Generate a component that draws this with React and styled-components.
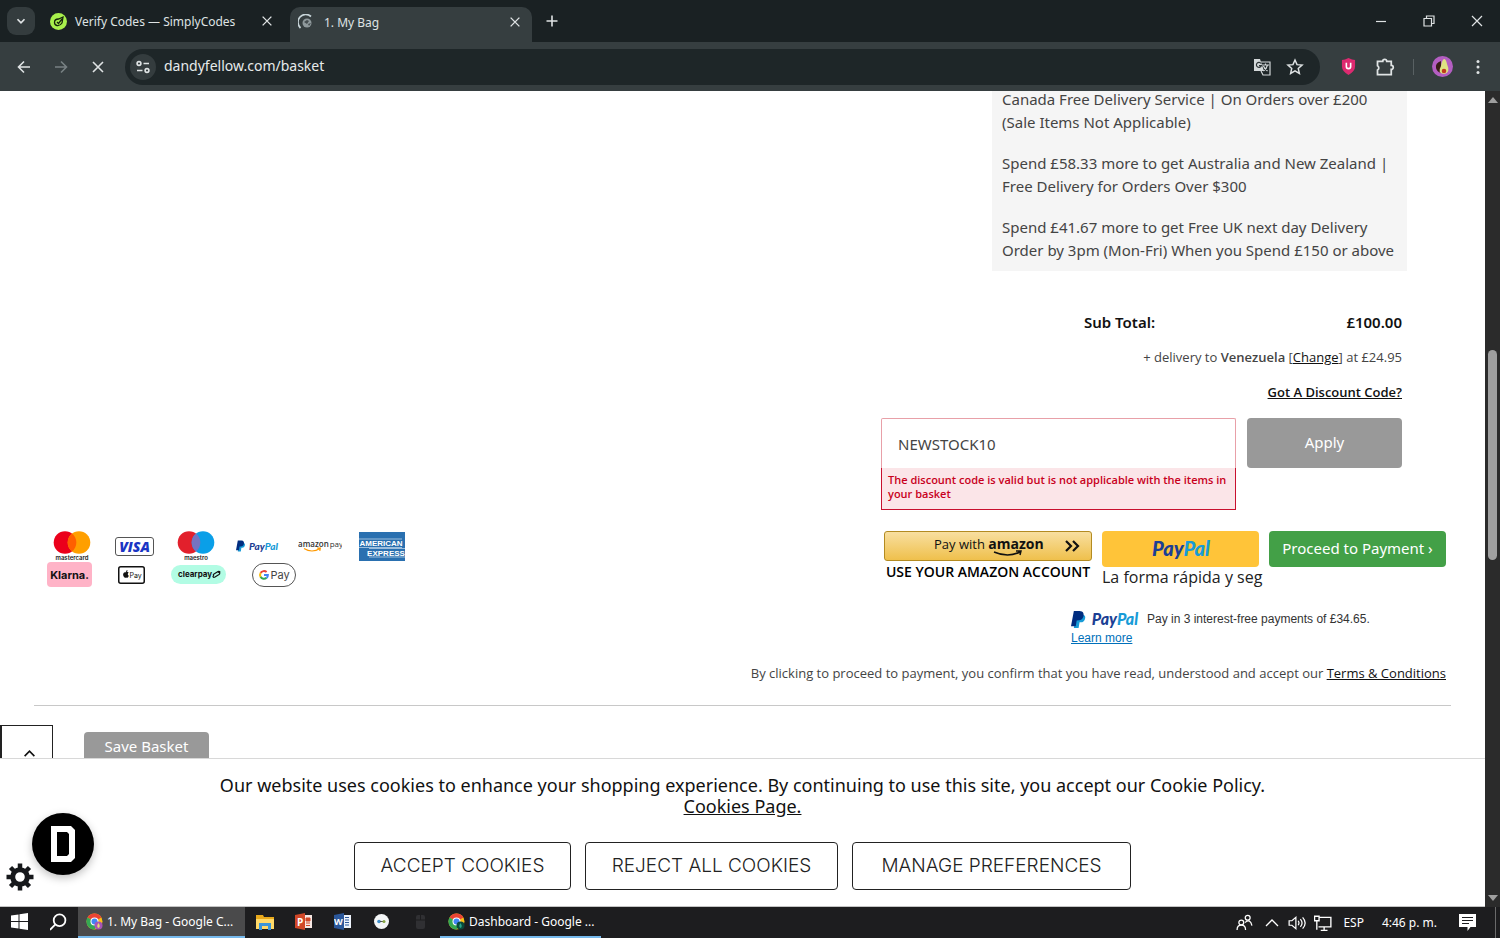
import React, { useState } from 'react'
import styled, { createGlobalStyle } from 'styled-components'

const GlobalStyle = createGlobalStyle`
  * {
    box-sizing: border-box;
  }
  body {
    margin: 0;
    background: #fff;
    font-family: "Noto Sans", sans-serif;
  }
  p {
    margin: 0;
  }
  button {
    font-family: inherit;
    cursor: pointer;
  }
  svg {
    display: block;
    flex: none;
  }
`

const Screen = styled.div`
  display: flex;
  flex-direction: column;
  height: 100vh;
  overflow: hidden;
`

/* BROWSER */

const TabStrip = styled.div`
  display: flex;
  align-items: flex-end;
  height: 42px;
  padding-left: 7px;
  background: #1a2123;
  color: #dfe3e4;
  font-size: 12px;
`

const TabSearch = styled.button`
  display: flex;
  align-items: center;
  justify-content: center;
  width: 28px;
  height: 28px;
  margin-bottom: 7px;
  padding: 0;
  border: 0;
  border-radius: 9px;
  background: #343c3e;
`

const Tab = styled.div`
  display: flex;
  align-items: center;
  gap: ${({ $active }) => ($active ? '10px' : '8px')};
  width: ${({ $active }) => ($active ? '242px' : '255px')};
  height: ${({ $active }) => ($active ? '35px' : '42px')};
  padding: ${({ $active }) => ($active ? '0 9px 5px 8px' : '0 15px 0 15px')};
  border-radius: 10px 10px 0 0;
  background: ${({ $active }) => ($active ? '#363e40' : 'transparent')};
`

const TabTitle = styled.span`
  flex: 1;
  white-space: nowrap;
`

const IconButton = styled.button`
  display: flex;
  align-items: center;
  justify-content: center;
  width: ${({ $size }) => $size || 16}px;
  height: ${({ $size }) => $size || 16}px;
  padding: 0;
  border: 0;
  background: none;
`

const NewTab = styled.div`
  display: flex;
  align-items: center;
  height: 42px;
  padding-left: 12px;
`

const WindowButtons = styled.div`
  display: flex;
  align-items: center;
  gap: 32px;
  height: 42px;
  margin-left: auto;
  padding-right: 15px;
`

const Toolbar = styled.div`
  display: flex;
  align-items: center;
  height: 49px;
  padding: 0 14px 0 16px;
  background: #363e40;
`

const NavButtons = styled.div`
  display: flex;
  gap: 21px;
  margin-right: 19px;
`

const AddressBar = styled.form`
  display: flex;
  align-items: center;
  flex: 1;
  height: 36px;
  padding: 0 16px 0 5px;
  border-radius: 18px;
  background: #1e2628;
`

const SiteInfo = styled.button`
  display: flex;
  align-items: center;
  justify-content: center;
  width: 26px;
  height: 26px;
  padding: 0;
  border: 0;
  border-radius: 50%;
  background: #343c3e;
`

const UrlInput = styled.input`
  flex: 1;
  min-width: 0;
  padding: 0 0 2px 8px;
  border: 0;
  outline: 0;
  background: none;
  color: #e6eaeb;
  font: 14px "Noto Sans", sans-serif;
`

const AddressIcons = styled.div`
  display: flex;
  gap: 15px;
`

const Extensions = styled.div`
  display: flex;
  align-items: center;
  gap: 18px;
  margin-left: 19px;
`

const ToolbarDivider = styled.span`
  width: 1px;
  height: 16px;
  background: #596163;
`

/* PAGE */

const Viewport = styled.div`
  display: flex;
  flex: 1;
  min-height: 0;
`

const Page = styled.div`
  position: relative;
  display: flex;
  flex-direction: column;
  flex: 1;
  min-width: 0;
  border-bottom: 1px solid #c4c4c4;
`

const Basket = styled.main`
  flex: 1;
  min-height: 0;
  overflow: hidden;
  color: #444;
`

const BasketInner = styled.div`
  margin: 0 34px;
  border-bottom: 1px solid #c8c8c8;
  padding-bottom: 22px;
`

const Promo = styled.div`
  display: flex;
  flex-direction: column;
  gap: 18px;
  width: 415px;
  margin: -3px 44px 0 auto;
  padding: 0 10px 9px;
  background: #f5f5f5;
  font-size: 15px;
  line-height: 23px;
  white-space: nowrap;
`

const Summary = styled.section`
  display: flex;
  flex-direction: column;
  align-items: flex-end;
  margin: 39px 49px 0 0;
`

const SubTotal = styled.div`
  display: flex;
  justify-content: space-between;
  width: 318px;
  color: #111;
  font-size: 15px;
  font-weight: 600;
  line-height: 24px;
`

const Delivery = styled.p`
  margin-top: 13px;
  font: 13px/20px "Open Sans", sans-serif;

  b {
    font-weight: 600;
  }
`

const TextLink = styled.a`
  color: #111;
  font-weight: ${({ $bold }) => ($bold ? 600 : 400)};
  text-decoration: underline;
`

const DiscountToggle = styled.p`
  margin-top: 15px;
  font: 13px/20px "Open Sans", sans-serif;
`

const DiscountForm = styled.form`
  display: flex;
  align-items: flex-start;
  gap: 11px;
  margin-top: 16px;
`

const CodeField = styled.div`
  width: 355px;
`

const CodeInput = styled.input`
  display: block;
  width: 100%;
  height: 50px;
  padding: 0 16px;
  border: 1px solid #e8a0a8;
  border-bottom: 0;
  border-radius: 2px 2px 0 0;
  outline: 0;
  color: #444;
  font: 15px "Noto Sans", sans-serif;
`

const FieldError = styled.p`
  padding: 5px 6px 8px;
  border: 1px solid #c8102e;
  border-top: 0;
  background: #fbe5e8;
  color: #c8001c;
  font: 600 11px/14px "Open Sans", sans-serif;
`

const GreyButton = styled.button`
  width: ${({ $width }) => $width}px;
  height: ${({ $height }) => $height}px;
  padding: 0 0 2px;
  border: 0;
  border-radius: 4px;
  background: #999;
  color: #fff;
  font-size: 15px;
`

const PaymentRow = styled.div`
  display: flex;
  align-items: flex-start;
  justify-content: space-between;
  margin: 21px 5px 0;
`

const CardLogos = styled.ul`
  display: grid;
  grid-template-columns: repeat(6, 62px);
  height: 29px;
  place-items: center;
  margin: 0 0 0 2px;
  padding: 0;
  list-style: none;
`

const WalletLogos = styled.ul`
  display: flex;
  align-items: center;
  gap: 26px;
  height: 29px;
  margin: 0;
  padding: 0 0 0 8px;
  list-style: none;
`

const PayButtons = styled.div`
  display: flex;
  gap: 10px;
`

const PayOption = styled.div`
  width: ${({ $width }) => $width}px;
  white-space: nowrap;
`

const AmazonButton = styled.button`
  display: flex;
  align-items: center;
  justify-content: center;
  width: 100%;
  height: 30px;
  padding: 0;
  border: 1px solid #b38b22;
  border-radius: 3px;
  background: linear-gradient(#f8dfa0, #efc04c);
`

const AmazonNote = styled.p`
  color: #000;
  font: 600 14px/22px "Open Sans", sans-serif;
  text-align: center;
`

const PaypalButton = styled.button`
  display: flex;
  align-items: center;
  justify-content: center;
  width: 100%;
  height: 36px;
  padding: 0;
  border: 0;
  border-radius: 4px;
  background: #ffc439;
`

const PaypalNote = styled.p`
  color: #222;
  font: 16px/20px "Open Sans", sans-serif;
`

const ProceedButton = styled.button`
  width: 177px;
  height: 36px;
  padding: 0 0 2px;
  border: 0;
  border-radius: 4px;
  background: #43a047;
  color: #fff;
  font-size: 15px;
  white-space: nowrap;
`

const PayLater = styled.div`
  width: 375px;
  margin: 21px 5px 0 auto;
  color: #333;
  font: 12px/19px "Liberation Sans", Arial, sans-serif;

  a {
    color: #0070ba;
  }
`

const PayLaterLine = styled.p`
  display: flex;
  align-items: center;
  gap: 5px;
`

const Terms = styled.p`
  margin: 15px 5px 0 0;
  font: 13px/20px "Open Sans", sans-serif;
  text-align: right;
`

const SaveRow = styled.div`
  display: flex;
  align-items: flex-start;
  gap: 31px;
  padding-top: 19px;
`

const BackToTop = styled.button`
  display: flex;
  justify-content: center;
  width: 53px;
  height: 53px;
  padding: 22px 0 0 4px;
  border: 1px solid #222;
  border-left-width: 2px;
  background: #fff;
`

const SaveWrap = styled.div`
  padding-top: 7px;
`

/* COOKIES */

const CookieBanner = styled.section`
  padding: 16px 20px;
  border-top: 1px solid #d8d8d8;
  background: #fff;
  color: #111;
  font-size: 18px;
  line-height: 21px;
  text-align: center;
`

const CookieActions = styled.div`
  display: flex;
  justify-content: center;
  gap: 14px;
  margin-top: 25px;
`

const CookieButton = styled.button`
  width: ${({ $width }) => $width}px;
  height: 48px;
  padding: 0 0 2px;
  border: 1px solid #222;
  border-radius: 4px;
  background: #fff;
  color: #222;
  font: 300 19px Inter, sans-serif;
  text-transform: uppercase;
  white-space: nowrap;
`

const ChatBadge = styled.button`
  position: absolute;
  left: 32px;
  bottom: 31px;
  display: flex;
  align-items: center;
  justify-content: center;
  width: 62px;
  height: 62px;
  padding: 0;
  border: 0;
  border-radius: 50%;
  background: #000;
  box-shadow: 0 3px 8px rgba(0, 0, 0, 0.25);
`

const GearBadge = styled.button`
  position: absolute;
  left: 6px;
  bottom: 15px;
  padding: 0;
  border: 0;
  background: none;
`

const Scrollbar = styled.div`
  display: flex;
  flex-direction: column;
  align-items: center;
  width: 15px;
  padding: 6px 0;
  background: #2b2b2b;
`

const ScrollThumb = styled.div`
  width: 9px;
  height: 210px;
  margin: 247px 0 auto;
  border-radius: 5px;
  background: #9f9f9f;
`

/* TASKBAR */

const Taskbar = styled.footer`
  display: flex;
  align-items: stretch;
  height: 31px;
  background: #1d1d1f;
  color: #fff;
  font-size: 12px;
`

const TaskButton = styled.button`
  display: flex;
  align-items: center;
  justify-content: ${({ $label }) => ($label ? 'flex-start' : 'center')};
  gap: 4px;
  width: ${({ $width }) => $width || 39}px;
  padding: ${({ $label }) => ($label ? '0 0 0 8px' : '0')};
  border: 0;
  border-bottom: 2px solid ${({ $label }) => ($label ? '#76b9ed' : 'transparent')};
  background: ${({ $active }) => ($active ? '#4a4a4b' : 'none')};
  color: #fff;
  font-size: 12px;
  white-space: nowrap;
`

const Tray = styled.div`
  display: flex;
  align-items: center;
  gap: 11px;
  margin-left: auto;
  padding-right: 4px;
`

const TrayIcons = styled.div`
  display: flex;
  align-items: center;
  gap: 8px;
`

const TrayClock = styled.span`
  margin: 0 11px 0 7px;
  white-space: nowrap;
`

const ShowDesktop = styled.span`
  width: 1px;
  height: 31px;
  margin-left: 8px;
  background: #6a6a6a;
`

const Line = ({ size = 16, color = '#dfe3e4', width = 1.6, children }) => (
  <svg width={size} height={size} viewBox="0 0 16 16" fill="none" stroke={color} strokeWidth={width} aria-hidden="true">
    {children}
  </svg>
)

const CloseIcon = ({ size, width }) => (
  <Line size={size} width={width}><path d="M3 3l10 10M13 3L3 13" /></Line>
)

const ChromeIcon = ({ badge }) => (
  <svg width="17" height="17" viewBox="0 0 34 34" aria-hidden="true">
    <circle cx="17" cy="17" r="16" fill="#fbc116" />
    <path d="M17 17L3.1 9A16 16 0 0 1 30.9 9z" fill="#ea4335" />
    <path d="M17 17L3.1 9a16 16 0 0 0 13.9 24l6-10z" fill="#34a853" />
    <circle cx="17" cy="17" r="8" fill="#fff" />
    <circle cx="17" cy="17" r="6" fill="#4285f4" />
    <circle cx="25" cy="25" r="8" fill={badge} />
    <path d="M25 20q-5 7 0 10q5-3 0-10" fill={badge === '#a855b5' ? '#e6dc70' : '#2aa889'} />
  </svg>
)

const PaypalWord = ({ width, height, size, mark }) => (
  <svg width={width} height={height} viewBox={`0 0 ${width} ${height}`} role="img" aria-label="PayPal">
    {mark && (
      <g transform={`scale(${height / 20})`}>
        <path d="M5 5h7c3 0 4 3 2 6c-1 2-3 2-5 2l-1 6H3z" fill="#179bd7" />
        <path d="M3 1h6c4 0 5 3 4 6c-1 3-3 4-7 4l-1 6H0z" fill="#012d80" />
      </g>
    )}
    <text x={mark ? size * 1.3 : 1} y={height / 2 + size * 0.36} fontFamily="Lato, sans-serif" fontSize={size} fontWeight="900" fontStyle="italic" fill="#1c3f94">
      Pay<tspan fill="#179bd7">Pal</tspan>
    </text>
  </svg>
)

const PairLogo = ({ left, right, mix, label }) => (
  <svg width="40" height="30" viewBox="0 0 40 30" role="img" aria-label={label}>
    <circle cx="13" cy="11.5" r="11.3" fill={left} />
    <circle cx="27" cy="11.5" r="11.3" fill={right} />
    <path d="M20 2.6a11.3 11.3 0 0 1 0 17.8a11.3 11.3 0 0 1 0-17.8" fill={mix} />
    <text x="20" y="28.5" textAnchor="middle" fontFamily="Inter, sans-serif" fontSize="6" fontWeight="600" fill="#222">{label}</text>
  </svg>
)

const VisaLogo = () => (
  <svg width="39" height="19" viewBox="0 0 39 19" role="img" aria-label="Visa">
    <rect x=".5" y=".5" width="38" height="18" rx="2.5" fill="#fff" stroke="#555" />
    <text x="19.5" y="14.5" textAnchor="middle" fontFamily="Open Sans, sans-serif" fontSize="14" fontWeight="800" fontStyle="italic" fill="#1a35c4">VISA</text>
  </svg>
)

const AmazonPayLogo = () => (
  <svg width="44" height="16" viewBox="0 0 44 16" role="img" aria-label="Amazon Pay">
    <text x="0" y="9" fontFamily="Open Sans, sans-serif" fontSize="8" fontWeight="600" fill="#333">
      amazon<tspan fontWeight="400" dx="1">pay</tspan>
    </text>
    <path d="M6 10.5q8 5 16 0m-3-.5l3.4 0l-.6 3" stroke="#f90" fill="none" strokeWidth="1.1" />
  </svg>
)

const AmexLogo = () => (
  <svg width="46" height="29" viewBox="0 0 46 29" role="img" aria-label="American Express">
    <path d="M0 0h46v29H0z" fill="#2a70b0" />
    <path d="M0 7h43M0 15.5h43M10 16.5h36M10 25h36" stroke="#cfe0f0" strokeWidth=".7" />
    <g fontFamily="Liberation Sans, sans-serif" fontSize="8" fontWeight="700" fill="#fff">
      <text x="22" y="14" textAnchor="middle">AMERICAN</text>
      <text x="27" y="23.5" textAnchor="middle">EXPRESS</text>
    </g>
  </svg>
)

const KlarnaLogo = () => (
  <svg width="45" height="25" viewBox="0 0 45 25" role="img" aria-label="Klarna">
    <rect width="45" height="25" rx="4" fill="#ffb3c7" />
    <text x="22.5" y="17" textAnchor="middle" fontFamily="Inter, sans-serif" fontSize="11" fontWeight="700" fill="#111">Klarna.</text>
  </svg>
)

const ApplePayLogo = () => (
  <svg width="27" height="18" viewBox="0 0 27 18" role="img" aria-label="Apple Pay">
    <rect x=".75" y=".75" width="25.5" height="16.5" rx="2" fill="#fff" stroke="#111" strokeWidth="1.5" />
    <path d="M8 6.3c1-.8 2.3-.4 2.6.4c-1.3.8-1 2.5.3 3c-.6 1.5-1.5 2.5-2.7 1.9c-.9.5-2 .3-2.8-1.5c-.9-2.2.3-4.5 2.6-3.8M7.9 5.9c0-1 .7-1.8 1.6-2c.1 1-.6 1.9-1.6 2" fill="#111" />
    <text x="11.5" y="12" fontFamily="Inter, sans-serif" fontSize="7" fill="#111">Pay</text>
  </svg>
)

const ClearpayLogo = () => (
  <svg width="55" height="19" viewBox="0 0 55 19" role="img" aria-label="Clearpay">
    <rect width="55" height="19" rx="9.5" fill="#b2fce4" />
    <text x="7" y="12" fontFamily="Inter, sans-serif" fontSize="8" fontWeight="700" fill="#111">clearpay</text>
    <path d="M42 11q0 2 2 1l4-2.5q1.5-1 0-2l-1-.5M49 7.5q0-1.5-2-1l-4 2.5q-1.5 1 0 2" stroke="#111" fill="none" strokeWidth="1.2" />
  </svg>
)

const GooglePayLogo = () => (
  <svg width="44" height="24" viewBox="0 0 44 24" role="img" aria-label="Google Pay">
    <rect x=".5" y=".5" width="43" height="23" rx="11.5" fill="#fff" stroke="#555" />
    <g fill="none" strokeWidth="2">
      <path d="M14.6 9.1A4 4 0 0 0 8.6 9.9" stroke="#ea4335" />
      <path d="M8.6 9.9A4 4 0 0 0 8.6 13.9" stroke="#fbbc04" />
      <path d="M8.6 13.9A4 4 0 0 0 14.5 14.9" stroke="#34a853" />
      <path d="M14.5 14.9Q16 13.6 15.9 11.9H12" stroke="#4285f4" />
    </g>
    <text x="18.5" y="16" fontFamily="Inter, sans-serif" fontSize="11" fill="#444">Pay</text>
  </svg>
)

function BrowserChrome() {
  return (
    <header>
      <TabStrip>
        <TabSearch aria-label="Search tabs">
          <Line size={14} width={2}><path d="M4 6l4 4l4-4" /></Line>
        </TabSearch>
        <Tab>
          <svg width="17" height="17" viewBox="0 0 17 17" aria-hidden="true">
            <circle cx="8.5" cy="8.5" r="8.5" fill="#a8f04c" />
            <path d="M4.5 9.5q0-3.5 4-3.5l4.5-2l-1 6q-2 3-5 2.5q-2.5-.5-2.5-3M7 9l1.5 1.5L12 6" stroke="#16240b" strokeWidth="1.3" fill="none" />
          </svg>
          <TabTitle>Verify Codes — SimplyCodes</TabTitle>
          <IconButton aria-label="Close tab"><CloseIcon size={14} /></IconButton>
        </Tab>
        <Tab $active>
          <svg width="16" height="16" viewBox="0 0 16 16" aria-hidden="true">
            <circle cx="9" cy="9" r="4.5" fill="#8f999c" />
            <path d="M6 8l3-2l2 1l-2 3zM10 10l3-1l-2 3z" fill="#454d50" />
            <path d="M2.5 14A7 7 0 0 1 13 2.5" stroke="#c7d4d8" strokeWidth="1.7" fill="none" />
          </svg>
          <TabTitle>1. My Bag</TabTitle>
          <IconButton aria-label="Close tab"><CloseIcon size={14} /></IconButton>
        </Tab>
        <NewTab>
          <IconButton aria-label="New tab"><Line><path d="M8 2.5v11M2.5 8h11" /></Line></IconButton>
        </NewTab>
        <WindowButtons>
          <IconButton aria-label="Minimize"><Line width={1.2}><path d="M3 8.5h10" /></Line></IconButton>
          <IconButton aria-label="Restore"><Line width={1.2}><path d="M3 5.5h7.5v7.5H3zM5.5 5.5V3H13v7.5h-2.5" /></Line></IconButton>
          <IconButton aria-label="Close"><CloseIcon width={1.2} /></IconButton>
        </WindowButtons>
      </TabStrip>
      <Toolbar>
        <NavButtons>
          <IconButton aria-label="Back"><Line><path d="M14 8H3M8 2.5L2.5 8L8 13.5" /></Line></IconButton>
          <IconButton aria-label="Forward"><Line color="#788083"><path d="M2 8h11M8 2.5L13.5 8L8 13.5" /></Line></IconButton>
          <IconButton aria-label="Stop"><CloseIcon /></IconButton>
        </NavButtons>
        <AddressBar onSubmit={(e) => e.preventDefault()}>
          <SiteInfo type="button" aria-label="Site information">
            <Line><circle cx="4" cy="4.5" r="1.9" /><path d="M8.5 4.5H14M2 11.5h5.5" /><circle cx="12" cy="11.5" r="1.9" /></Line>
          </SiteInfo>
          <UrlInput aria-label="Address" defaultValue="dandyfellow.com/basket" />
          <AddressIcons>
            <IconButton type="button" $size={18} aria-label="Translate">
              <svg width="18" height="18" viewBox="0 0 18 18" aria-hidden="true">
                <path d="M1 1h6l4 12H1z" fill="#d3d8d9" />
                <path d="M8 4h9v13H10L8 13M9 7h7M12.5 5.5V7m2 0q-1 4-4 6m0-5q1 3 4 5" stroke="#d3d8d9" fill="none" strokeWidth="1.2" />
                <path d="M8 5.5a2.5 2.5 0 1 0 .3 2.2H6" stroke="#2a3234" fill="none" strokeWidth="1.2" />
              </svg>
            </IconButton>
            <IconButton type="button" $size={18} aria-label="Bookmark">
              <Line size={18} width={1.3}><path d="M8 1.8l1.8 4.1l4.5.4l-3.4 3l1 4.4L8 11.4l-3.9 2.3l1-4.4l-3.4-3l4.5-.4z" /></Line>
            </IconButton>
          </AddressIcons>
        </AddressBar>
        <Extensions>
          <IconButton $size={18} aria-label="Shield">
            <svg width="15" height="17" viewBox="0 0 16 18" aria-hidden="true">
              <path d="M8 0q4 2 7 2v7q0 5-7 9q-7-4-7-9V2q3 0 7-2" fill="#dd2a70" />
              <path d="M5.7 5v4q0 2.3 2.3 2.3t2.3-2.3V5" stroke="#fff" strokeWidth="1.7" fill="none" />
            </svg>
          </IconButton>
          <IconButton $size={20} aria-label="Extensions">
            <Line size={20} width={1.4}><path d="M2 3.5h4.2a1.6 1.6 0 0 1 3.2 0H13v3.2a1.6 1.6 0 0 1 0 3.2V14H2v-3.5a2 2 0 0 0 0-3.5z" /></Line>
          </IconButton>
          <ToolbarDivider />
          <IconButton $size={20} aria-label="Profile">
            <svg width="21" height="21" viewBox="0 0 21 21" aria-hidden="true">
              <circle cx="10.5" cy="10.5" r="10.5" fill="#b45ec2" />
              <path d="M9 5q-6 2-5 7q1 4 5 5z" fill="#3a1c16" />
              <path d="M12 3q2 0 3 5q4 9-3 10q-7-1-3-8q1-6 3-7" fill="#dfe283" />
              <circle cx="12" cy="15" r="2.3" fill="#c13a1c" />
            </svg>
          </IconButton>
          <IconButton aria-label="Menu">
            <svg width="16" height="16" viewBox="0 0 16 16" fill="#dfe3e4" aria-hidden="true">
              <circle cx="8" cy="2.5" r="1.5" /><circle cx="8" cy="8" r="1.5" /><circle cx="8" cy="13.5" r="1.5" />
            </svg>
          </IconButton>
        </Extensions>
      </Toolbar>
    </header>
  )
}

function BasketPage() {
  const [code, setCode] = useState('NEWSTOCK10')

  return (
    <Basket>
      <BasketInner>
        <Promo>
          <p>Canada Free Delivery Service | On Orders over £200<br />(Sale Items Not Applicable)</p>
          <p>Spend £58.33 more to get Australia and New Zealand |<br />Free Delivery for Orders Over $300</p>
          <p>Spend £41.67 more to get Free UK next day Delivery<br />Order by 3pm (Mon-Fri) When you Spend £150 or above</p>
        </Promo>

        <Summary>
          <SubTotal>
            <span>Sub Total:</span>
            <span>£100.00</span>
          </SubTotal>
          <Delivery>
            + delivery to <b>Venezuela</b> [<TextLink href="#change">Change</TextLink>] at £24.95
          </Delivery>
          <DiscountToggle>
            <TextLink href="#discount" $bold>Got A Discount Code?</TextLink>
          </DiscountToggle>
          <DiscountForm onSubmit={(e) => e.preventDefault()}>
            <CodeField>
              <CodeInput
                aria-label="Discount code"
                aria-describedby="code-error"
                value={code}
                onChange={(e) => setCode(e.target.value)}
              />
              <FieldError id="code-error">
                The discount code is valid but is not applicable with the items in your basket
              </FieldError>
            </CodeField>
            <GreyButton $width={155} $height={50}>Apply</GreyButton>
          </DiscountForm>
        </Summary>

        <PaymentRow>
          <div>
            <CardLogos>
              <li><PairLogo left="#eb001b" right="#ff9f00" mix="#ff5f00" label="mastercard" /></li>
              <li><VisaLogo /></li>
              <li><PairLogo left="#e2202c" right="#0a9fe8" mix="#7673c0" label="maestro" /></li>
              <li><PaypalWord width={44} height={12} size={10} mark /></li>
              <li><AmazonPayLogo /></li>
              <li><AmexLogo /></li>
            </CardLogos>
            <WalletLogos>
              <li><KlarnaLogo /></li>
              <li><ApplePayLogo /></li>
              <li><ClearpayLogo /></li>
              <li><GooglePayLogo /></li>
            </WalletLogos>
          </div>
          <PayButtons>
            <PayOption $width={208}>
              <AmazonButton aria-label="Pay with amazon">
                <svg width="206" height="28" viewBox="0 0 206 28" aria-hidden="true">
                  <text x="49" y="17" fontFamily="Open Sans, sans-serif" fontSize="13" fill="#111">
                    Pay with <tspan fontWeight="700" fontSize="14">amazon</tspan>
                  </text>
                  <path d="M109 20q14 6 26 0m-4-1h5l-1 4" stroke="#111" strokeWidth="1.5" fill="none" />
                  <path d="M181 9l5 5l-5 5M188 9l5 5l-5 5" stroke="#111" strokeWidth="2.2" fill="none" />
                </svg>
              </AmazonButton>
              <AmazonNote>USE YOUR AMAZON ACCOUNT</AmazonNote>
            </PayOption>
            <PayOption $width={157}>
              <PaypalButton aria-label="PayPal"><PaypalWord width={60} height={24} size={20} /></PaypalButton>
              <PaypalNote>La forma rápida y seg</PaypalNote>
            </PayOption>
            <ProceedButton>Proceed to Payment ›</ProceedButton>
          </PayButtons>
        </PaymentRow>

        <PayLater>
          <PayLaterLine>
            <PaypalWord width={71} height={19} size={16} mark />
            Pay in 3 interest-free payments of £34.65.
          </PayLaterLine>
          <a href="#learn">Learn more</a>
        </PayLater>

        <Terms>
          By clicking to proceed to payment, you confirm that you have read, understood and accept our{' '}
          <TextLink href="#terms">Terms &amp; Conditions</TextLink>
        </Terms>
      </BasketInner>

      <SaveRow>
        <BackToTop aria-label="Back to top">
          <Line size={13} color="#111" width={2}><path d="M2 10l6-6l6 6" /></Line>
        </BackToTop>
        <SaveWrap>
          <GreyButton $width={125} $height={29}>Save Basket</GreyButton>
        </SaveWrap>
      </SaveRow>
    </Basket>
  )
}

function Cookies() {
  return (
    <CookieBanner>
      <p>Our website uses cookies to enhance your shopping experience. By continuing to use this site, you accept our Cookie Policy.</p>
      <p><TextLink href="#cookies">Cookies Page.</TextLink></p>
      <CookieActions>
        <CookieButton $width={217}>Accept Cookies</CookieButton>
        <CookieButton $width={253}>Reject All Cookies</CookieButton>
        <CookieButton $width={279}>Manage Preferences</CookieButton>
      </CookieActions>
    </CookieBanner>
  )
}

function WindowsTaskbar() {
  return (
    <Taskbar>
      <TaskButton aria-label="Start">
        <svg width="17" height="17" viewBox="0 0 17 17" fill="#fff" aria-hidden="true">
          <path d="M0 2.5l7.5-1V8H0zM8.5 1.3L17 0v8H8.5zM0 9h7.5v6.5L0 14.5zM8.5 9H17v8l-8.5-1.3z" />
        </svg>
      </TaskButton>
      <TaskButton aria-label="Search">
        <Line size={18} color="#fff"><circle cx="8.5" cy="6.5" r="5.2" /><path d="M4.8 10.2L0 15" /></Line>
      </TaskButton>
      <TaskButton $label $active $width={167}>
        <ChromeIcon badge="#a855b5" />
        1. My Bag - Google C...
      </TaskButton>
      <TaskButton aria-label="File Explorer">
        <svg width="18" height="16" viewBox="0 0 18 16" aria-hidden="true">
          <path d="M0 1h7l1 2h10v12H0z" fill="#e8a91c" />
          <path d="M0 5h18v10H0z" fill="#ffd968" />
          <path d="M3 16V9h12v7h-3v-4H6v4z" fill="#3a94d8" />
        </svg>
      </TaskButton>
      <TaskButton aria-label="PowerPoint">
        <svg width="17" height="17" viewBox="0 0 17 17" aria-hidden="true">
          <path d="M9 2h8v13H9z" fill="#f6e8e4" />
          <path d="M11 5h4v3h-4zM11 10h4M11 12.5h4" stroke="#d04727" fill="#d04727" />
          <path d="M0 2l10-2v17L0 15z" fill="#d04727" />
          <text x="2" y="12.5" fontFamily="Open Sans, sans-serif" fontSize="10" fontWeight="700" fill="#fff">P</text>
        </svg>
      </TaskButton>
      <TaskButton aria-label="Word">
        <svg width="17" height="17" viewBox="0 0 17 17" aria-hidden="true">
          <path d="M9 2h8v13H9z" fill="#eef3fb" />
          <path d="M11 4.5h4M11 7h4M11 9.5h4M11 12h4" stroke="#2b579a" />
          <path d="M0 2l10-2v17L0 15z" fill="#2b579a" />
          <text x="0" y="12" fontFamily="Open Sans, sans-serif" fontSize="9" fontWeight="700" fill="#fff">W</text>
        </svg>
      </TaskButton>
      <TaskButton aria-label="Remote">
        <svg width="15" height="15" viewBox="0 0 15 15" aria-hidden="true">
          <circle cx="7.5" cy="7.5" r="7.5" fill="#f4f6f7" />
          <circle cx="5" cy="7.5" r="1.8" fill="#3f8fcc" />
          <path d="M6 7.5h4" stroke="#555" />
          <circle cx="10" cy="7.5" r="1.5" fill="#86a845" />
        </svg>
      </TaskButton>
      <TaskButton aria-label="Device">
        <svg width="9" height="14" viewBox="0 0 9 14" aria-hidden="true">
          <rect width="9" height="14" rx="2" fill="#303033" />
          <path d="M0 5h9M4.5 0v5" stroke="#1d1d1f" />
        </svg>
      </TaskButton>
      <TaskButton $label $width={161}>
        <ChromeIcon badge="#0b4a3c" />
        Dashboard - Google ...
      </TaskButton>
      <Tray>
        <TrayIcons>
          <Line size={17} color="#fff" width={1.2}><circle cx="5" cy="8" r="2.3" /><circle cx="11" cy="3.5" r="2.3" /><path d="M1 15q0-4.5 4-4.5T9 15M8.5 8q5-4 6.5 3" /></Line>
        </TrayIcons>
        <TrayIcons>
          <Line color="#fff" width={1.3}><path d="M2 11l6-6l6 6" /></Line>
          <Line size={18} color="#fff" width={1.1}><path d="M1 6h2.5L7 3v10L3.5 10H1zM9 6q1.5 2 0 4M11 4.5q3 3.5 0 7M13 3q4.5 5 0 10" /></Line>
          <Line size={18} color="#fff" width={1.2}><path d="M5 3h10v8.5H4M9 11.5v3M6 14.5h6M.5 2h4v4h-4zM2.5 6v8" /></Line>
        </TrayIcons>
        <span>ESP</span>
        <TrayClock>4:46 p. m.</TrayClock>
        <svg width="17" height="17" viewBox="0 0 17 17" aria-label="Notifications">
          <path d="M0 0h17v13h-5.5L8.5 17v-4H0z" fill="#fff" />
          <path d="M3 3.5h11M3 6.5h11M3 9.5h7" stroke="#1d1d1f" />
        </svg>
        <ShowDesktop />
      </Tray>
    </Taskbar>
  )
}

function App() {
  return (
    <Screen>
      <GlobalStyle />
      <BrowserChrome />
      <Viewport>
        <Page>
          <BasketPage />
          <Cookies />
          <GearBadge aria-label="Settings">
            <svg width="28" height="28" viewBox="0 0 28 28" aria-hidden="true">
              <circle cx="14" cy="14" r="7.3" fill="none" stroke="#16181b" strokeWidth="5" />
              <path
                d="M14 .5v5M14 22.5v5M.5 14h5M22.5 14h5M4.5 4.5L8 8M20 20l3.5 3.5M4.5 23.5L8 20M20 8l3.5-3.5"
                stroke="#16181b"
                strokeWidth="4.5"
              />
            </svg>
          </GearBadge>
          <ChatBadge aria-label="Chat">
            <svg width="24" height="36" viewBox="0 0 24 36" aria-hidden="true">
              <path d="M0 0h20l4 4v28l-4 4H0zM6 6v24h10l2-2V8l-2-2z" fill="#fff" fillRule="evenodd" />
            </svg>
          </ChatBadge>
        </Page>
        <Scrollbar aria-hidden="true">
          <svg width="10" height="6" viewBox="0 0 10 6"><path d="M0 6l5-6l5 6z" fill="#9f9f9f" /></svg>
          <ScrollThumb />
          <svg width="10" height="6" viewBox="0 0 10 6"><path d="M0 0l5 6l5-6z" fill="#9f9f9f" /></svg>
        </Scrollbar>
      </Viewport>
      <WindowsTaskbar />
    </Screen>
  )
}

export default App
